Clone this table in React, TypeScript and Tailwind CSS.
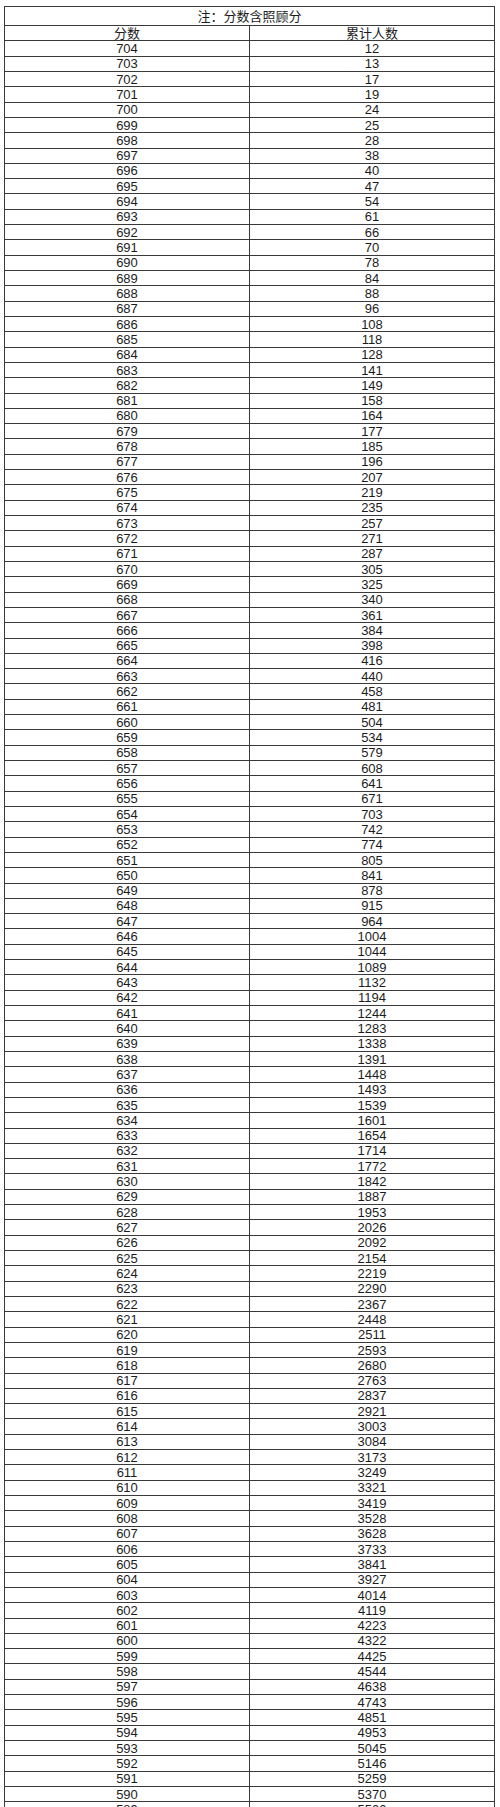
const rows: [number, string][] = [
  [704, "12"], [703, "13"], [702, "17"], [701, "19"], [700, "24"], [699, "25"], [698, "28"], [697, "38"],
  [696, "40"], [695, "47"], [694, "54"], [693, "61"], [692, "66"], [691, "70"], [690, "78"], [689, "84"],
  [688, "88"], [687, "96"], [686, "108"], [685, "118"], [684, "128"], [683, "141"], [682, "149"], [681, "158"],
  [680, "164"], [679, "177"], [678, "185"], [677, "196"], [676, "207"], [675, "219"], [674, "235"], [673, "257"],
  [672, "271"], [671, "287"], [670, "305"], [669, "325"], [668, "340"], [667, "361"], [666, "384"], [665, "398"],
  [664, "416"], [663, "440"], [662, "458"], [661, "481"], [660, "504"], [659, "534"], [658, "579"], [657, "608"],
  [656, "641"], [655, "671"], [654, "703"], [653, "742"], [652, "774"], [651, "805"], [650, "841"], [649, "878"],
  [648, "915"], [647, "964"], [646, "1004"], [645, "1044"], [644, "1089"], [643, "1132"], [642, "1194"], [641, "1244"],
  [640, "1283"], [639, "1338"], [638, "1391"], [637, "1448"], [636, "1493"], [635, "1539"], [634, "1601"], [633, "1654"],
  [632, "1714"], [631, "1772"], [630, "1842"], [629, "1887"], [628, "1953"], [627, "2026"], [626, "2092"], [625, "2154"],
  [624, "2219"], [623, "2290"], [622, "2367"], [621, "2448"], [620, "2511"], [619, "2593"], [618, "2680"], [617, "2763"],
  [616, "2837"], [615, "2921"], [614, "3003"], [613, "3084"], [612, "3173"], [611, "3249"], [610, "3321"], [609, "3419"],
  [608, "3528"], [607, "3628"], [606, "3733"], [605, "3841"], [604, "3927"], [603, "4014"], [602, "4119"], [601, "4223"],
  [600, "4322"], [599, "4425"], [598, "4544"], [597, "4638"], [596, "4743"], [595, "4851"], [594, "4953"], [593, "5045"],
  [592, "5146"], [591, "5259"], [590, "5370"], [589, "5500"],
];

function Row({ left, right }: { left: string; right: string }) {
  return (
    <div className="grid h-[15.32px] grid-cols-[245px_1fr] border-b border-[#3a3a3a]">
      <div className="flex items-center justify-center border-r border-[#3a3a3a]">{left}</div>
      <div className="flex items-center justify-center">{right}</div>
    </div>
  );
}

export default function App() {
  return (
    <div className="h-[1807px] w-[500px] overflow-hidden bg-white pl-[4px] pt-[6px]">
      <div
        className="w-[491px] border-x border-t border-[#3a3a3a] text-[13px] leading-none text-[#1c1c1c]"
        style={{ fontFamily: '"Liberation Sans", "Noto Sans CJK SC", sans-serif' }}
      >
        {/* 标题 */}
        <div className="flex h-[19px] items-center justify-center border-b border-[#3a3a3a]">
          注：分数含照顾分
        </div>
        <Row left="分数" right="累计人数" />
        {rows.map(([score, count]) => (
          <Row key={score} left={String(score)} right={count} />
        ))}
      </div>
    </div>
  );
}
